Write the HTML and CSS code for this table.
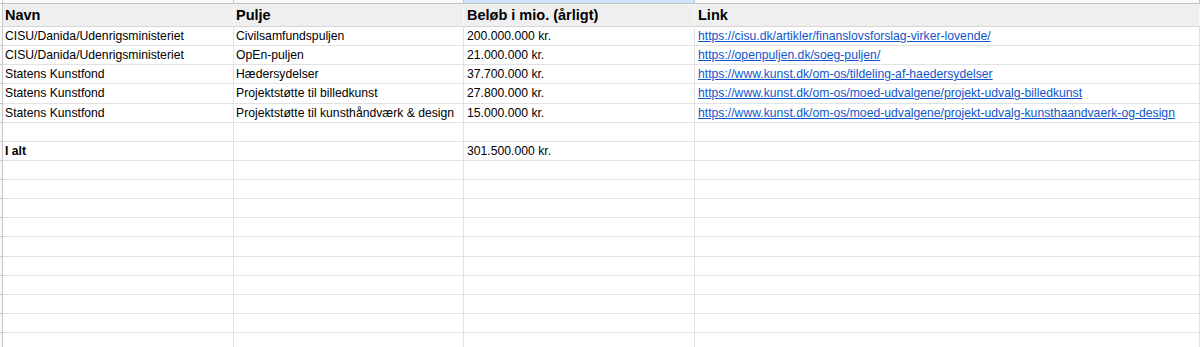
FILE: index.html
```html
<!DOCTYPE html>
<html lang="da">
<head>
<meta charset="utf-8">
<title>Puljer</title>
<link rel="stylesheet" href="styles.css">
</head>
<body>
<div class="sheet">
  <div class="row colhead">
    <div class="c rh"></div>
    <div class="c"></div>
    <div class="c"></div>
    <div class="c sel"></div>
    <div class="c"></div>
  </div>
  <div class="row head">
    <div class="c rh"></div>
    <div class="c">Navn</div>
    <div class="c">Pulje</div>
    <div class="c">Beløb i mio. (årligt)</div>
    <div class="c">Link</div>
  </div>
  <div class="row">
    <div class="c rh"></div>
    <div class="c">CISU/Danida/Udenrigsministeriet</div>
    <div class="c">Civilsamfundspuljen</div>
    <div class="c">200.000.000 kr.</div>
    <div class="c"><a href="#">https://cisu.dk/artikler/finanslovsforslag-virker-lovende/</a></div>
  </div>
  <div class="row">
    <div class="c rh"></div>
    <div class="c">CISU/Danida/Udenrigsministeriet</div>
    <div class="c">OpEn-puljen</div>
    <div class="c">21.000.000 kr.</div>
    <div class="c"><a href="#">https://openpuljen.dk/soeg-puljen/</a></div>
  </div>
  <div class="row">
    <div class="c rh"></div>
    <div class="c">Statens Kunstfond</div>
    <div class="c">Hædersydelser</div>
    <div class="c">37.700.000 kr.</div>
    <div class="c"><a href="#">https://www.kunst.dk/om-os/tildeling-af-haedersydelser</a></div>
  </div>
  <div class="row">
    <div class="c rh"></div>
    <div class="c">Statens Kunstfond</div>
    <div class="c">Projektstøtte til billedkunst</div>
    <div class="c">27.800.000 kr.</div>
    <div class="c"><a href="#">https://www.kunst.dk/om-os/moed-udvalgene/projekt-udvalg-billedkunst</a></div>
  </div>
  <div class="row">
    <div class="c rh"></div>
    <div class="c">Statens Kunstfond</div>
    <div class="c">Projektstøtte til kunsthåndværk &amp; design</div>
    <div class="c">15.000.000 kr.</div>
    <div class="c"><a href="#">https://www.kunst.dk/om-os/moed-udvalgene/projekt-udvalg-kunsthaandvaerk-og-design</a></div>
  </div>
  <div class="row"><div class="c rh"></div><div class="c"></div><div class="c"></div><div class="c"></div><div class="c"></div></div>
  <div class="row total">
    <div class="c rh"></div>
    <div class="c">I alt</div>
    <div class="c"></div>
    <div class="c">301.500.000 kr.</div>
    <div class="c"></div>
  </div>
  <div class="row"><div class="c rh"></div><div class="c"></div><div class="c"></div><div class="c"></div><div class="c"></div></div>
  <div class="row"><div class="c rh"></div><div class="c"></div><div class="c"></div><div class="c"></div><div class="c"></div></div>
  <div class="row"><div class="c rh"></div><div class="c"></div><div class="c"></div><div class="c"></div><div class="c"></div></div>
  <div class="row"><div class="c rh"></div><div class="c"></div><div class="c"></div><div class="c"></div><div class="c"></div></div>
  <div class="row"><div class="c rh"></div><div class="c"></div><div class="c"></div><div class="c"></div><div class="c"></div></div>
  <div class="row"><div class="c rh"></div><div class="c"></div><div class="c"></div><div class="c"></div><div class="c"></div></div>
  <div class="row"><div class="c rh"></div><div class="c"></div><div class="c"></div><div class="c"></div><div class="c"></div></div>
  <div class="row"><div class="c rh"></div><div class="c"></div><div class="c"></div><div class="c"></div><div class="c"></div></div>
  <div class="row"><div class="c rh"></div><div class="c"></div><div class="c"></div><div class="c"></div><div class="c"></div></div>
  <div class="row"><div class="c rh"></div><div class="c"></div><div class="c"></div><div class="c"></div><div class="c"></div></div>
  <div class="row"><div class="c rh"></div><div class="c"></div><div class="c"></div><div class="c"></div><div class="c"></div></div>
</div>
</body>
</html>
```

FILE: styles.css
```css
html, body {
  margin: 0;
  padding: 0;
  background: #ffffff;
}

.sheet {
  width: 1200px;
  height: 347px;
  overflow: hidden;
  font-family: "Liberation Sans", Arial, sans-serif;
  font-size: 12.2px;
  color: #000000;
}

.row {
  display: grid;
  grid-template-columns: 3px 231px 230px 231px 1fr;
  height: 19.125px;
  box-sizing: border-box;
}

.c {
  box-sizing: border-box;
  border-right: 1px solid #e2e2e2;
  border-bottom: 1px solid #e2e2e2;
  padding-left: 2px;
  white-space: nowrap;
  overflow: hidden;
  display: flex;
  align-items: center;
}

.c:nth-child(4),
.c:nth-child(5) {
  padding-left: 3px;
}

.c.rh {
  padding: 0;
  background: #f8f9fa;
  border-right: 1px solid #c7c7c7;
  border-bottom: 1px solid #c7c7c7;
}

.colhead {
  height: 4px;
}

.colhead .c {
  background: #f8f9fa;
  border-right: 1px solid #c7c7c7;
  border-bottom: 1px solid #c4c4c4;
}

.colhead .c.sel {
  background: #d3e3fd;
}

.head {
  height: 23px;
}

.head .c {
  background: #efefef;
  font-weight: bold;
  font-size: 14.5px;
  border-right: 1px solid #f7f7f7;
  border-bottom: 1px solid #d6d6d6;
}

.head .c.rh {
  background: #f8f9fa;
  border-right: 1px solid #c7c7c7;
}

.total .c:nth-child(2) {
  font-weight: bold;
}

a {
  color: #1155cc;
  text-decoration: underline;
}
```
